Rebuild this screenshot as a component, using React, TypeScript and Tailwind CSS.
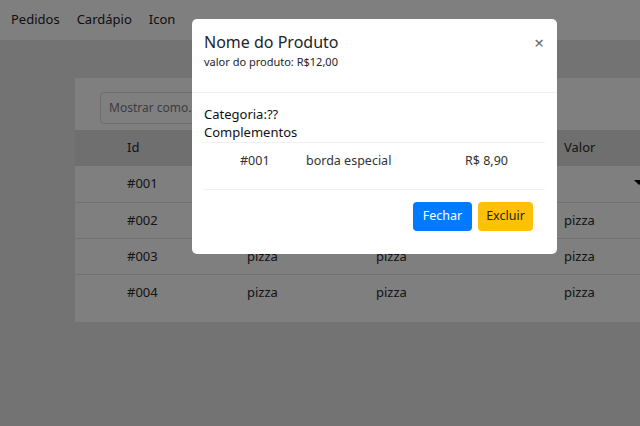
import React from "react";

const font = { fontFamily: '"Noto Sans", "Open Sans", sans-serif' };

export default function App() {
  const rows = ["#002", "#003", "#004"];
  return (
    <div className="relative w-[640px] h-[426px] overflow-hidden bg-[#e6e6e6] text-[#212529]" style={font}>
      <div className="h-[41px] bg-white border-b border-[#e4e4e4] flex items-center pl-[11px] gap-[17px] text-[13px] text-[#222]">
        <span>Pedidos</span>
        <span>Cardápio</span>
        <span>Icon</span>
      </div>
      <div className="ml-[75px] mt-[37px] bg-white h-[244px] pt-[14px]">
        <div className="ml-[25px] w-[160px] h-[32px] border border-[#dadada] rounded-[4px] flex items-center pl-[8px] text-[12px] text-[#7a7a7a]">
          Mostrar como...
        </div>
        <div className="mt-[6px] text-[13px] text-[#2a2a2a]">
          <div className="flex h-[36px] items-center bg-[#dedede]">
            <div className="w-[172px] pl-[52px]">Id</div>
            <div className="w-[129px]"></div>
            <div className="w-[188px]"></div>
            <div>Valor</div>
          </div>
          <div className="flex h-[37px] items-center border-b border-[#e2e2e2] relative">
            <div className="w-[172px] pl-[52px]">#001</div>
            <div className="absolute right-[-4px] top-[14px] w-0 h-0 border-l-[5px] border-r-[5px] border-t-[5px] border-l-transparent border-r-transparent border-t-black"></div>
          </div>
          {rows.map((r) => (
            <div key={r} className="flex h-[36px] items-center border-b border-[#e2e2e2] last:border-b-0">
              <div className="w-[172px] pl-[52px]">{r}</div>
              <div className="w-[129px]">pizza</div>
              <div className="w-[188px]">pizza</div>
              <div>pizza</div>
            </div>
          ))}
        </div>
      </div>

      <div className="absolute inset-0 bg-black/50"></div>

      <div className="absolute left-[192px] top-[19px] w-[365px] h-[235px] bg-white rounded-[5px] flex flex-col">
        <div className="h-[74px] border-b border-[#f0f0f0] px-[12px] pt-[13px] relative">
          <div className="text-[16px] leading-[20px] text-[#212529]">Nome do Produto</div>
          <div className="text-[11px] leading-[16px] mt-[2px] text-[#212529]">valor do produto: R$12,00</div>
          <div className="absolute right-[13px] top-[11px] text-[17px] text-[#666]">×</div>
        </div>
        <div className="px-[12px] pt-[12px]">
          <div className="text-[13px] leading-[18px] text-[#111]">Categoria:??</div>
          <div className="text-[13px] leading-[18px] text-[#111]">Complementos</div>
          <div className="border-t border-[#f0f0f0] mt-[1px] h-[48px] border-b flex items-start pt-[9px] text-[12.5px] text-[#333]">
            <div className="w-[102px] pl-[36px]">#001</div>
            <div className="w-[159px]">borda especial</div>
            <div>R$ 8,90</div>
          </div>
          <div className="flex justify-end gap-[6px] mt-[12px] pr-[12px]">
            <div className="h-[29px] w-[59px] justify-center rounded-[4px] bg-[#007bff] text-white text-[12.5px] flex items-center">Fechar</div>
            <div className="h-[29px] w-[55px] justify-center rounded-[4px] bg-[#ffc107] text-[#212529] text-[12.5px] flex items-center">Excluir</div>
          </div>
        </div>
      </div>
    </div>
  );
}
